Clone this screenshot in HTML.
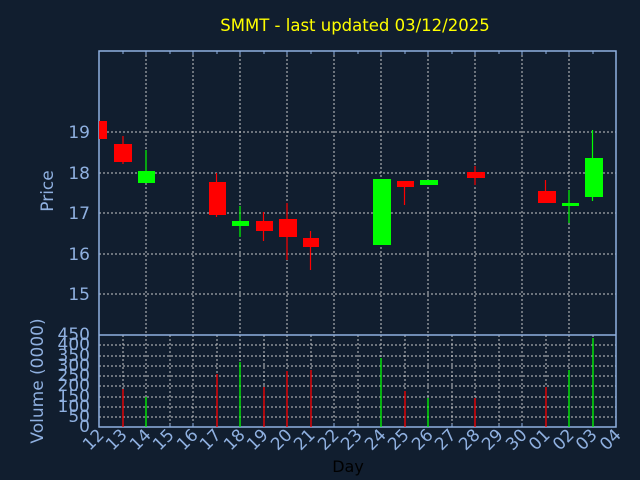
<!DOCTYPE html>
<html><head><style>
html,body{margin:0;padding:0;background:#111e2f;}
svg{display:block;font-family:"DejaVu Sans","Liberation Sans",sans-serif;}
</style></head><body>
<svg width="640" height="480" viewBox="0 0 640 480" xmlns="http://www.w3.org/2000/svg">
<rect width="640" height="480" fill="#111e2f"/>
<text x="355" y="31" fill="#ffff00" font-size="16.5" text-anchor="middle">SMMT - last updated 03/12/2025</text>
<g stroke="#c8c8c8" stroke-width="1" stroke-dasharray="2,2" fill="none">
<path d="M146 51V335M193 51V335M240 51V335M287 51V335M334 51V335M381 51V335M428 51V335M475 51V335M522 51V335M569 51V335"/>
<path d="M99 132H616M99 173H616M99 213H616M99 254H616M99 294H616"/>
<path d="M123 335V427M146 335V427M170 335V427M193 335V427M217 335V427M240 335V427M264 335V427M287 335V427M311 335V427M334 335V427M358 335V427M381 335V427M405 335V427M428 335V427M452 335V427M475 335V427M499 335V427M522 335V427M546 335V427M569 335V427M593 335V427"/>
<path d="M99 417H616M99 407H616M99 397H616M99 386H616M99 376H616M99 366H616M99 356H616M99 345H616"/>
</g>
<g stroke="#8fb0e0" stroke-width="1.5" fill="none">
<rect x="99" y="51" width="517" height="376"/>
<path d="M99 335H616"/>
</g>
<g stroke="#8fb0e0" stroke-width="1">
<path d="M123 51v3M146 51v4M170 51v3M193 51v4M217 51v3M240 51v4M264 51v3M287 51v4M311 51v3M334 51v4M358 51v3M381 51v4M405 51v3M428 51v4M452 51v3M475 51v4M499 51v3M522 51v4M546 51v3M569 51v4M593 51v3"/>
<path d="M123 427v-3M146 427v-4M170 427v-3M193 427v-4M217 427v-3M240 427v-4M264 427v-3M287 427v-4M311 427v-3M334 427v-4M358 427v-3M381 427v-4M405 427v-3M428 427v-4M452 427v-3M475 427v-4M499 427v-3M522 427v-4M546 427v-3M569 427v-4M593 427v-3"/>
</g>
<g stroke="#ff0000" stroke-width="1.2">
<path d="M123 136V164M216.5 173V217M263.5 212V241M287 203V260M310.5 231V270M404.5 181V205M475 166V185M545.5 180V203"/>
</g>
<g stroke="#00ff00" stroke-width="1.2">
<path d="M146 150V183M240 206V237M569 190V223M592.5 130V201"/>
</g>
<g fill="#ff0000">
<rect x="99" y="121" width="8" height="18"/>
<rect x="114" y="144" width="18" height="18"/>
<rect x="209" y="182" width="17" height="33"/>
<rect x="256" y="221" width="17" height="10"/>
<rect x="279" y="219" width="18" height="18"/>
<rect x="303" y="238" width="16" height="9"/>
<rect x="397" y="181" width="17" height="6"/>
<rect x="467" y="172" width="18" height="6"/>
<rect x="538" y="191" width="18" height="12"/>
</g>
<g fill="#00ff00">
<rect x="138" y="171" width="17" height="12"/>
<rect x="232" y="221" width="17" height="5"/>
<rect x="373" y="179" width="18" height="66"/>
<rect x="420" y="180" width="18" height="5"/>
<rect x="562" y="203" width="17" height="3"/>
<rect x="585" y="158" width="18" height="39"/>
</g>
<g stroke="#ff0000" stroke-width="1.3">
<path d="M123 427V389M217 427V374M264 427V387M287 427V371M311 427V370M405 427V391M475 427V398M546 427V387"/>
</g>
<g stroke="#00ff00" stroke-width="1.3">
<path d="M146 427V397M240 427V362M381 427V358M428 427V398M569 427V370M593 427V338"/>
</g>
<g fill="#8fb0e0" font-size="17" text-anchor="end">
<text x="90" y="138">19</text><text x="90" y="179">18</text><text x="90" y="219">17</text><text x="90" y="260">16</text><text x="90" y="300">15</text>
<text x="90" y="432">0</text><text x="90" y="422">50</text><text x="90" y="412">100</text><text x="90" y="402">150</text><text x="90" y="391">200</text><text x="90" y="381">250</text><text x="90" y="371">300</text><text x="90" y="361">350</text><text x="90" y="350">400</text><text x="90" y="340">450</text>
</g>
<text transform="translate(53,191) rotate(-90)" fill="#8fb0e0" font-size="17" text-anchor="middle">Price</text>
<text transform="translate(43,381) rotate(-90)" fill="#8fb0e0" font-size="17" text-anchor="middle">Volume (0000)</text>
<g fill="#8fb0e0" font-size="17" text-anchor="end">
<text transform="translate(105,436) rotate(-45)">12</text>
<text transform="translate(128,436) rotate(-45)">13</text>
<text transform="translate(152,436) rotate(-45)">14</text>
<text transform="translate(175,436) rotate(-45)">15</text>
<text transform="translate(199,436) rotate(-45)">16</text>
<text transform="translate(222,436) rotate(-45)">17</text>
<text transform="translate(246,436) rotate(-45)">18</text>
<text transform="translate(269,436) rotate(-45)">19</text>
<text transform="translate(293,436) rotate(-45)">20</text>
<text transform="translate(316,436) rotate(-45)">21</text>
<text transform="translate(340,436) rotate(-45)">22</text>
<text transform="translate(363,436) rotate(-45)">23</text>
<text transform="translate(387,436) rotate(-45)">24</text>
<text transform="translate(410,436) rotate(-45)">25</text>
<text transform="translate(434,436) rotate(-45)">26</text>
<text transform="translate(457,436) rotate(-45)">27</text>
<text transform="translate(481,436) rotate(-45)">28</text>
<text transform="translate(504,436) rotate(-45)">29</text>
<text transform="translate(528,436) rotate(-45)">30</text>
<text transform="translate(551,436) rotate(-45)">01</text>
<text transform="translate(575,436) rotate(-45)">02</text>
<text transform="translate(598,436) rotate(-45)">03</text>
<text transform="translate(622,436) rotate(-45)">04</text>
</g>
<text x="348" y="472" fill="#000000" font-size="16" text-anchor="middle">Day</text>
</svg>
</body></html>
